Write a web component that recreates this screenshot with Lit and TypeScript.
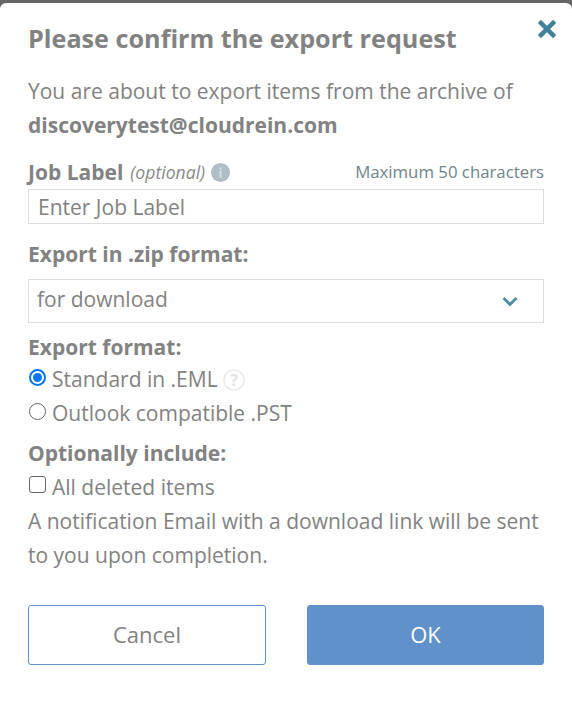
import { LitElement, html, css } from "lit";
import { customElement } from "lit/decorators.js";

@customElement("app-root")
export class AppRoot extends LitElement {
  static styles = css`
    :host {
      display: block;
      width: 572px;
      height: 703px;
      background: #666;
      font-family: "Open Sans", sans-serif;
      color: #828282;
      overflow: hidden;
    }
    .modal {
      box-sizing: border-box;
      height: 700px;
      margin-top: 3px;
      background: #fff;
      border-radius: 6px 6px 0 0;
      padding: 18px 28px 0;
      position: relative;
      display: flex;
      flex-direction: column;
    }
    .close {
      position: absolute;
      top: 16px;
      right: 15px;
      width: 20px;
      height: 20px;
      display: block;
    }
    h1 {
      margin: 0;
      font-size: 25.2px;
      line-height: 34px;
      font-weight: 700;
    }
    .line {
      font-size: 21px;
      line-height: 34px;
    }
    .intro { margin-top: 19px; }
    b { font-weight: 700; }
    .job {
      display: flex;
      align-items: center;
      justify-content: space-between;
      height: 34px;
      margin-top: 13px;
    }
    .job-left { display: flex; align-items: center; }
    .job-left b { font-size: 21px; }
    .job-left i { font-size: 17.6px; margin-left: 7px; color: #8a8a8a; }
    .info { margin-left: 6px; display: block; }
    .max { font-size: 16.8px; color: #71838c; margin-top: -2px; }
    .input {
      box-sizing: border-box;
      height: 35px;
      border: 1px solid #ddd;
      padding: 0 9px;
      font-size: 21px;
      line-height: 34px;
    }
    .label {
      font-size: 21px;
      line-height: 34px;
      font-weight: 700;
    }
    .zip { margin-top: 13px; }
    .select {
      box-sizing: border-box;
      height: 44px;
      margin-top: 8px;
      border: 1px solid #ddd;
      padding: 0 25px 0 8px;
      display: flex;
      align-items: center;
      justify-content: space-between;
      font-size: 21px;
    }
    .select span { margin-top: -5px; }
    .select svg { display: block; }
    .fmt { margin-top: 9px; line-height: 30px; }
    .opt {
      display: flex;
      align-items: center;
      height: 34px;
      font-size: 21px;
    }
    .radio, .check {
      box-sizing: border-box;
      width: 17px;
      height: 17px;
      margin: -3px 6px 0 1px;
      border: 1.5px solid #666;
      flex: none;
      background: #fff;
    }
    .radio { border-radius: 50%; }
    .radio.on {
      border: 2px solid #0075ff;
      display: flex;
      align-items: center;
      justify-content: center;
    }
    .radio.on::after {
      content: "";
      width: 9px;
      height: 9px;
      border-radius: 50%;
      background: #0075ff;
    }
    .check { border-radius: 3px; margin-top: -5px; }
    .help { margin-left: 5px; margin-top: 2px; display: block; }
    .optional { margin-top: 6px; }
    .actions {
      display: flex;
      justify-content: space-between;
      margin-top: 33px;
    }
    .btn {
      box-sizing: border-box;
      width: 238px;
      height: 60px;
      padding-bottom: 2px;
      border-radius: 3px;
      border: 1px solid #6191cb;
      display: flex;
      align-items: center;
      justify-content: center;
      font-size: 22px;
      background: #fff;
    }
    .btn.primary {
      width: 237px;
      background: #6191cb;
      color: #fff;
    }
  `;

  render() {
    return html`
      <div class="modal">
        <svg class="close" viewBox="0 0 20 20">
          <path d="M2.4 2.4L17.6 17.6M17.6 2.4L2.4 17.6" stroke="#3f8199" stroke-width="4.4" fill="none" />
        </svg>
        <h1>Please confirm the export request</h1>
        <div class="line intro">You are about to export items from the archive of</div>
        <div class="line"><b>discoverytest@cloudrein.com</b></div>
        <div class="job">
          <div class="job-left">
            <b>Job Label</b><i>(optional)</i>
            <svg class="info" width="19" height="19" viewBox="0 0 19 19">
              <circle cx="9.5" cy="9.5" r="9.5" fill="#b0bdc4" />
              <rect x="8.4" y="8" width="2.2" height="6.5" fill="#d5dde1" />
              <rect x="8.4" y="4.5" width="2.2" height="2.2" fill="#d5dde1" />
            </svg>
          </div>
          <span class="max">Maximum 50 characters</span>
        </div>
        <div class="input">Enter Job Label</div>
        <div class="label zip">Export in .zip format:</div>
        <div class="select">
          <span>for download</span>
          <svg width="16" height="11" viewBox="0 0 16 11">
            <path d="M1.5 2L8 8.5L14.5 2" stroke="#4f8da3" stroke-width="2.8" fill="none" />
          </svg>
        </div>
        <div class="label fmt">Export format:</div>
        <div class="opt">
          <span class="radio on"></span>Standard in .EML
          <svg class="help" width="22" height="22" viewBox="0 0 22 22">
            <circle cx="11" cy="11" r="10" fill="#fff" stroke="#ebebeb" stroke-width="1.6" />
            <text x="11" y="17" text-anchor="middle" font-size="16" font-weight="700" fill="#e2e2e2">?</text>
          </svg>
        </div>
        <div class="opt"><span class="radio"></span>Outlook compatible .PST</div>
        <div class="label optional">Optionally include:</div>
        <div class="opt"><span class="check"></span>All deleted items</div>
        <div class="line">A notification Email with a download link will be sent</div>
        <div class="line">to you upon completion.</div>
        <div class="actions">
          <div class="btn">Cancel</div>
          <div class="btn primary">OK</div>
        </div>
      </div>
    `;
  }
}
